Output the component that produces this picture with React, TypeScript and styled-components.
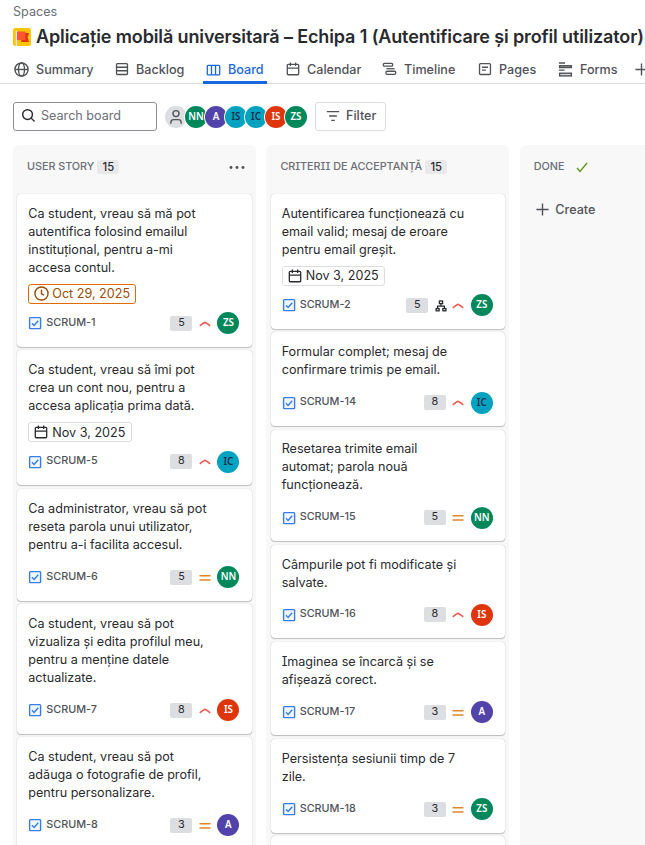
import React from "react";
import styled, { createGlobalStyle, css } from "styled-components";

const Global = createGlobalStyle`
  * { box-sizing: border-box; }
  html, body { margin: 0; padding: 0; background: #fff; overflow: hidden; }
  body {
    font-family: Inter, "Liberation Sans", sans-serif;
    font-feature-settings: "cv08" 1;
    color: #292a2e;
    font-size: 12.6px;
  }
  svg { display: block; flex: none; }
`;

const Page = styled.div`
  width: 645px;
  height: 845px;
  overflow: hidden;
  display: flex;
  flex-direction: column;
`;

const Breadcrumb = styled.div`
  margin: 3px 0 0 13px;
  height: 18px;
  line-height: 18px;
  font-size: 12.6px;
  color: #6b6e76;
`;

const TitleRow = styled.div`
  display: flex;
  align-items: center;
  gap: 5px;
  height: 24px;
  margin: 4px 0 0 13px;
`;

const Title = styled.h1`
  margin: 0;
  font-size: 18px;
  line-height: 24px;
  font-weight: 600;
  letter-spacing: -0.125px;
  white-space: nowrap;
`;

const TabBar = styled.nav`
  display: flex;
  height: 35px;
  border-bottom: 1px solid #dddee1;
  padding-left: 11px;
  flex: none;
`;

const Tab = styled.div<{ $active?: boolean; $width: number }>`
  display: flex;
  flex: none;
  gap: 7px;
  align-items: center;
  width: ${(p) => p.$width}px;
  padding: 5px 0 0 3px;
  height: 35px;
  font-weight: 500;
  white-space: nowrap;
  color: ${(p) => (p.$active ? "#1868db" : "#505258")};
  ${(p) =>
    p.$active &&
    css`
      margin-right: 16px;
      border-bottom: 3px solid #1868db;
      padding-top: 9px;
    `}
`;

const Toolbar = styled.div`
  display: flex;
  align-items: center;
  margin: 18px 0 0 13px;
  height: 29px;
  flex: none;
`;

const SearchBox = styled.div`
  display: flex;
  align-items: center;
  gap: 5px;
  width: 144px;
  height: 29px;
  padding-left: 7px;
  padding-bottom: 2px;
  border: 1px solid #8c8f97;
  border-radius: 3px;
  color: #6b6e76;
`;

const Avatar = styled.div<{ $bg: string; $dark?: boolean }>`
  display: flex;
  align-items: center;
  justify-content: center;
  flex: none;
  width: 22px;
  height: 22px;
  border-radius: 50%;
  background: ${(p) => p.$bg};
  color: ${(p) => (p.$dark ? "#1c3050" : "#fff")};
  font: 600 9.8px/22px "Noto Sans", sans-serif;
`;

const AvatarGroup = styled.div`
  display: flex;
  flex-direction: row-reverse;
  align-items: center;
  margin-left: 8px;
  > * { box-shadow: 0 0 0 1px #fff; }
  > * + * { margin-right: -2px; }
`;

const FilterButton = styled.div`
  display: flex;
  align-items: center;
  gap: 6px;
  width: 71px;
  height: 29px;
  margin-left: 8px;
  padding: 0 0 2px 10px;
  border: 1px solid #dddee1;
  border-radius: 3px;
  font-weight: 500;
  color: #505258;
`;

const Board = styled.main`
  display: flex;
  gap: 10.4px;
  margin: 14px 0 0 13px;
  flex: 1;
  min-height: 0;
`;

const Column = styled.section`
  flex: none;
  width: 243px;
  height: 720px;
  background: #f8f8f8;
  border-radius: 6px 6px 0 0;
  overflow: hidden;
`;

const ColumnHeader = styled.header`
  display: flex;
  align-items: center;
  height: 48.8px;
  padding: 0 11px 5px 14px;
  font-size: 10.8px;
  font-weight: 500;
  letter-spacing: -0.03px;
  color: #6b6e76;
  > svg:last-child { margin-left: auto; }
`;

const Count = styled.span`
  margin-left: 3px;
  width: 22px;
  text-align: center;
  height: 14px;
  line-height: 14px;
  font-size: 11.2px;
  border-radius: 3px;
  background: #e9e9eb;
  color: #292a2e;
`;

const DoneMark = styled.span`
  margin-left: 12px;
`;

const CreateButton = styled.div`
  display: flex;
  align-items: center;
  gap: 5.5px;
  padding: 6px 0 0 15px;
  height: 26px;
  font-weight: 500;
  color: #505258;
`;

const CardList = styled.div`
  display: flex;
  flex-direction: column;
  gap: 3.6px;
  padding: 0 4.5px 0 4.3px;
`;

const CardBox = styled.article`
  flex: none;
  padding: 10.8px 12.1px 12.6px 11px;
  background: #fff;
  border-radius: 4px;
  box-shadow: 0 1px 1px #1e1f2140, 0 0 1px #1e1f2150;
`;

const Summary = styled.div`
  line-height: 18px;
  white-space: nowrap;
`;

const DateLozenge = styled.div<{ $due?: boolean }>`
  display: flex;
  width: max-content;
  align-items: center;
  gap: ${(p) => (p.$due ? 3 : 4)}px;
  height: 19.8px;
  margin: 7.2px 0 -3.6px;
  padding: 0 5.4px 0 5px;
  border: 1px solid ${(p) => (p.$due ? "#e06c00" : "#dddee1")};
  border-radius: 3px;
  color: ${(p) => (p.$due ? "#9e4c00" : "#292a2e")};
`;

const Footer = styled.div`
  display: flex;
  align-items: center;
  height: 21.6px;
  margin-top: 12.6px;
`;

const IssueKey = styled.span`
  margin: -2px auto 0 4px;
  font-size: 10.8px;
  font-weight: 500;
  color: #505258;
`;

const Points = styled.span`
  width: 22px;
  height: 15px;
  line-height: 14px;
  border-radius: 2px;
  background: #dddee1;
  text-align: center;
  font-size: 10.8px;
`;

const IconSlot = styled.span`
  display: flex;
  justify-content: center;
  width: 11px;
  margin: 1px 7.1px 0 6.9px;
`;

const TreeSlot = styled.span`
  margin: 1px 0 0 6.4px;
  + ${IconSlot} { margin-left: 6px; }
`;

type IconProps = { children: React.ReactNode; w?: number; h?: number; sw?: number; box?: string };
const Icon = ({ children, w = 14, h = 14, sw = 1.5, box = "0 0 16 16" }: IconProps) => (
  <svg width={w} height={h} viewBox={box} fill="none" stroke="currentColor" strokeWidth={sw}>
    {children}
  </svg>
);

const GlobeIcon = () => (
  <Icon w={15} h={15}>
    <circle cx="8" cy="8" r="7" />
    <ellipse cx="8" cy="8" rx="3.2" ry="7" />
    <path d="M1 8h14" />
  </Icon>
);
const BacklogIcon = () => (
  <Icon>
    <rect x="1.75" y="1.75" width="12.5" height="12.5" rx="1" />
    <path d="M2 6h12M2 10h12" />
  </Icon>
);
const BoardIcon = () => (
  <Icon w={15} h={14}>
    <rect x="0.9" y="2.75" width="14.2" height="10.8" rx="1" />
    <path d="M5.7 3v10.4M10.3 3v10.4" />
  </Icon>
);
const CalendarIcon = () => (
  <Icon>
    <rect x="1.5" y="2.75" width="13" height="11.8" rx="1" />
    <path d="M2 7h12M5 0.5v4.2M11 0.5v4.2" />
  </Icon>
);
const TimelineIcon = () => (
  <Icon w={15} h={14}>
    <rect x="0.9" y="1.6" width="10.8" height="3.2" rx="1.4" />
    <path d="M4.5 7.7h9.2" />
    <rect x="3.9" y="10.6" width="11.2" height="3.6" rx="1.5" />
  </Icon>
);
const PagesIcon = () => (
  <Icon>
    <rect x="1.75" y="1.75" width="12.5" height="12.5" rx="1.2" />
    <path d="M4.5 6h7M4.5 9.2h4.5" />
  </Icon>
);
const FormsIcon = () => (
  <Icon w={15} h={15}>
    <path d="M1 1h6.5M1 8.7h6" />
    <rect x="1.75" y="4" width="12.5" height="1.9" fill="#b7b9be" />
    <rect x="1.75" y="12" width="12.5" height="2.8" fill="#dddee1" />
  </Icon>
);
const PlusIcon = () => (
  <Icon w={15} h={15}>
    <path d="M8 1.5v13M1.5 8h13" />
  </Icon>
);
const ClockIcon = () => (
  <Icon w={15} h={15}>
    <circle cx="8" cy="8" r="7" />
    <path d="M8 4v4.3l2.7 1.5" />
  </Icon>
);
const SearchIcon = () => (
  <Icon w={15} h={15}>
    <circle cx="7" cy="7" r="5.2" stroke="#292a2e" />
    <path d="M10.8 10.8L14.5 14.5" stroke="#292a2e" />
  </Icon>
);
const FilterIcon = () => (
  <Icon>
    <path d="M1 3h14M3.6 8h8.8M6 13h4" />
  </Icon>
);
const PersonIcon = () => (
  <svg width="14" height="16" viewBox="0 0 14 16" fill="none" stroke="#505258" strokeWidth="1.4">
    <circle cx="7" cy="4.6" r="3" />
    <path d="M1.9 14.8v-1.5q0-2.7 2.7-2.7h4.8q2.7 0 2.7 2.7v1.5" />
  </svg>
);
const MoreIcon = () => (
  <svg width="16" height="16" fill="#505258">
    <circle cx="2" cy="8.5" r="1.45" />
    <circle cx="8" cy="8.5" r="1.45" />
    <circle cx="14" cy="8.5" r="1.45" />
  </svg>
);
const CheckIcon = () => (
  <svg width="12" height="12" fill="none" stroke="#6a9a23" strokeWidth="1.5">
    <path d="M1 7l3 3.4L11 2" />
  </svg>
);
const TaskIcon = () => (
  <svg width="14" height="14" fill="none" stroke="#357de8" strokeWidth="1.4">
    <rect x="1.6" y="1.6" width="11" height="11" rx="0.8" fill="#f3f8ff" />
    <path d="M4 7.3l2.1 2.2L10.2 4.7" />
  </svg>
);
const TreeIcon = () => (
  <svg width="12" height="12" fill="none" stroke="#292a2e" strokeWidth="1.3">
    <rect x="4.4" y="1" width="3.2" height="2.6" />
    <rect x="1.1" y="8.6" width="3" height="2.2" />
    <rect x="7.9" y="8.6" width="3" height="2.2" />
    <path d="M6 3.6v2.5M2.6 8.6V6.1h6.8v2.5" />
  </svg>
);
const HighIcon = () => (
  <svg width="12" height="8" fill="none" stroke="#f15b50" strokeWidth="1.6">
    <path d="M0.8 5.8q4.4-3.4 5.2-3.4t5.2 3.4" />
  </svg>
);
const MediumIcon = () => (
  <svg width="12" height="8" fill="none" stroke="#e2852a" strokeWidth="1.5">
    <path d="M0.5 1.75h11M0.5 5.9h11" />
  </svg>
);
const FlagLogo = () => (
  <svg width="18" height="18">
    <rect width="18" height="18" rx="2.5" fill="#ffc400" />
    <path d="M3.4 3v15" stroke="#deebff" strokeWidth="1.3" />
    <path d="M10 5h6l-1.4 4.5L16 14H8z" fill="#de350b" />
    <path d="M4 3.5h8.4v8.6H4z" fill="#ff5630" />
  </svg>
);

const GREEN = "#00875a";
const PURPLE = "#5243aa";
const TEAL = "#00a3bf";
const RED = "#de350b";

const PEOPLE: Record<string, { text: string; bg: string; dark?: boolean }> = {
  nn: { text: "NN", bg: GREEN },
  a: { text: "A", bg: PURPLE },
  isTeal: { text: "IS", bg: TEAL, dark: true },
  ic: { text: "IC", bg: TEAL, dark: true },
  is: { text: "IS", bg: RED },
  zs: { text: "ZS", bg: GREEN },
};

const Person = ({ id }: { id: string }) => {
  const p = PEOPLE[id];
  return <Avatar $bg={p.bg} $dark={p.dark}>{p.text}</Avatar>;
};

type CardData = {
  lines: string[];
  date?: string;
  due?: boolean;
  num: number;
  points: number;
  tree?: boolean;
  high?: boolean;
  who: string;
};

const STORIES: CardData[] = [
  { lines: ["Ca student, vreau să mă pot", "autentifica folosind emailul", "instituțional, pentru a-mi", "accesa contul."], date: "Oct 29, 2025", due: true, num: 1, points: 5, high: true, who: "zs" },
  { lines: ["Ca student, vreau să îmi pot", "crea un cont nou, pentru a", "accesa aplicația prima dată."], date: "Nov 3, 2025", num: 5, points: 8, high: true, who: "ic" },
  { lines: ["Ca administrator, vreau să pot", "reseta parola unui utilizator,", "pentru a-i facilita accesul."], num: 6, points: 5, who: "nn" },
  { lines: ["Ca student, vreau să pot", "vizualiza și edita profilul meu,", "pentru a menține datele", "actualizate."], num: 7, points: 8, high: true, who: "is" },
  { lines: ["Ca student, vreau să pot", "adăuga o fotografie de profil,", "pentru personalizare."], num: 8, points: 3, who: "a" },
];

const CRITERIA: CardData[] = [
  { lines: ["Autentificarea funcționează cu", "email valid; mesaj de eroare", "pentru email greșit."], date: "Nov 3, 2025", num: 2, points: 5, tree: true, high: true, who: "zs" },
  { lines: ["Formular complet; mesaj de", "confirmare trimis pe email."], num: 14, points: 8, high: true, who: "ic" },
  { lines: ["Resetarea trimite email", "automat; parola nouă", "funcționează."], num: 15, points: 5, who: "nn" },
  { lines: ["Câmpurile pot fi modificate și", "salvate."], num: 16, points: 8, high: true, who: "is" },
  { lines: ["Imaginea se încarcă și se", "afișează corect."], num: 17, points: 3, who: "a" },
  { lines: ["Persistența sesiunii timp de 7", "zile."], num: 18, points: 3, who: "zs" },
];

const Card = ({ card }: { card: CardData }) => (
  <CardBox>
    {card.lines.map((l) => <Summary key={l}>{l}</Summary>)}
    {card.date && (
      <DateLozenge $due={card.due}>
        {card.due ? <ClockIcon /> : <CalendarIcon />}
        {card.date}
      </DateLozenge>
    )}
    <Footer>
      <TaskIcon />
      <IssueKey>SCRUM-{card.num}</IssueKey>
      <Points>{card.points}</Points>
      {card.tree && <TreeSlot><TreeIcon /></TreeSlot>}
      <IconSlot>{card.high ? <HighIcon /> : <MediumIcon />}</IconSlot>
      <Person id={card.who} />
    </Footer>
  </CardBox>
);

const App = () => (
  <>
    <Global />
    <Page>
      <Breadcrumb>Spaces</Breadcrumb>
      <TitleRow>
        <FlagLogo />
        <Title>Aplicație mobilă universitară – Echipa 1 (Autentificare și profil utilizator)</Title>
      </TitleRow>
      <TabBar>
        <Tab $width={101}><GlobeIcon />Summary</Tab>
        <Tab $width={91}><BacklogIcon />Backlog</Tab>
        <Tab $width={64} $active><BoardIcon />Board</Tab>
        <Tab $width={96}><CalendarIcon />Calendar</Tab>
        <Tab $width={96}><TimelineIcon />Timeline</Tab>
        <Tab $width={80}><PagesIcon />Pages</Tab>
        <Tab $width={76}><FormsIcon />Forms</Tab>
        <Tab $width={20}><PlusIcon /></Tab>
      </TabBar>
      <Toolbar>
        <SearchBox><SearchIcon />Search board</SearchBox>
        <AvatarGroup>
          {["zs", "is", "ic", "isTeal", "a", "nn"].map((id) => <Person key={id} id={id} />)}
          <Avatar $bg="#dddee1"><PersonIcon /></Avatar>
        </AvatarGroup>
        <FilterButton><FilterIcon />Filter</FilterButton>
      </Toolbar>
      <Board>
        <Column>
          <ColumnHeader>USER STORY<Count>15</Count><MoreIcon /></ColumnHeader>
          <CardList>{STORIES.map((c) => <Card key={c.num} card={c} />)}</CardList>
        </Column>
        <Column>
          <ColumnHeader>CRITERII DE ACCEPTANȚĂ<Count>15</Count></ColumnHeader>
          <CardList>
            {CRITERIA.map((c) => <Card key={c.num} card={c} />)}
            <CardBox />
          </CardList>
        </Column>
        <Column>
          <ColumnHeader>DONE<DoneMark><CheckIcon /></DoneMark></ColumnHeader>
          <CreateButton><PlusIcon />Create</CreateButton>
        </Column>
      </Board>
    </Page>
  </>
);

export default App;
